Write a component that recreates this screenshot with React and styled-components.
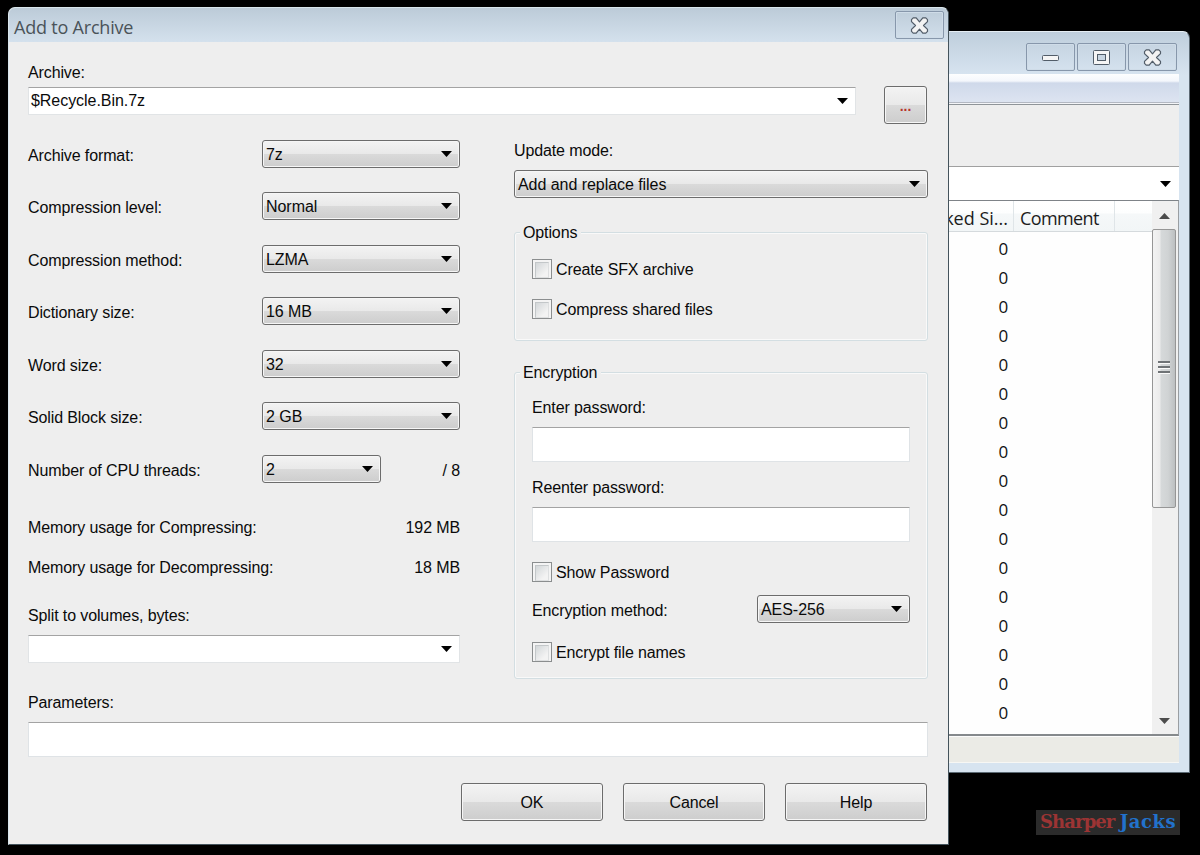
import React from 'react'
import styled, { createGlobalStyle } from 'styled-components'

const GlobalStyle = createGlobalStyle`
    * {
        box-sizing: border-box;
    }
    body {
        margin: 0;
        background-color: #000;
        overflow: hidden;
    }
`

const Desktop = styled.div`
    position: relative;
    width: 1200px;
    height: 855px;
    background-color: #000;
    font-family: "Liberation Sans", Arial, sans-serif;
    font-size: 16px;
    line-height: 22px;
    letter-spacing: -0.12px;
    color: #0a0a0a;
    white-space: nowrap;
    overflow: hidden;
`

/* windows */

const MainWindow = styled.div`
    position: absolute;
    left: 700px;
    top: 31px;
    width: 490px;
    height: 742px;
    padding: 0px 10px 9px 10px;
    display: flex;
    flex-direction: column;
    background: linear-gradient(#bfcedc 0px, #d7e4f0 43px, #d7e4f0 100%);
    border: 1px solid #e6eef4;
    border-right-color: #5c6a74;
    border-bottom-color: #5c6a74;
    border-radius: 7px 7px 0px 0px;
`
const DialogWindow = styled.div`
    position: absolute;
    left: 8px;
    top: 7px;
    width: 941px;
    height: 838px;
    display: flex;
    flex-direction: column;
    background-color: #eeeeee;
    border: 1px solid #d9e6ec;
    border-right-color: #44535c;
    border-bottom-color: #44535c;
    border-radius: 7px 7px 0px 0px;
    overflow: hidden;
`
const TitleBar = styled.div`
    height: 34px;
    padding: 3px 4px 0px 5px;
    display: flex;
    justify-content: space-between;
    align-items: flex-start;
    background: linear-gradient(#bccbd8, #d4e1ed);
`
const Title = styled.div`
    font-family: "Open Sans", "Noto Sans", sans-serif;
    font-size: 18px;
    line-height: 32px;
    letter-spacing: -0.2px;
    color: #4a5359;
`
const WindowButtons = styled.div`
    height: 42px;
    padding: 11px 2px 0px 0px;
    display: flex;
    justify-content: flex-end;
    gap: 2px;
`
const WindowButton = styled.div`
    width: 49px;
    height: 28px;
    display: flex;
    align-items: center;
    justify-content: center;
    border: 1px solid #8797ab;
    border-radius: 2px;
    box-shadow: inset 0 0 0 1px #cfdce8;
`

/* main window parts */

const MenuBar = styled.div`
    height: 31px;
    background: linear-gradient(#fdfeff 0px, #f4f7fc 7px, #cfd9ea 9px, #dde4f1 28px, #b3b8c2 28px, #b3b8c2 29px, #f4f5f8 29px);
    border-bottom: 1px solid #8f9499;
`
const ToolBar = styled.div`
    height: 61px;
    background-color: #eeeeee;
`
const AddressBar = styled.div`
    height: 34px;
    padding-right: 8px;
    display: flex;
    align-items: center;
    justify-content: flex-end;
    background-color: #fff;
    border-top: 1px solid #a0a0a0;
`
const ListView = styled.div`
    height: 536px;
    display: flex;
    background-color: #fefefe;
    border-top: 1px solid #7e8388;
    border-right: 1px solid #9a9ea2;
    border-bottom: 2px solid #85898c;
    font-family: "Open Sans", "Noto Sans", sans-serif;
    font-size: 17px;
`
const ListBody = styled.div`
    flex: 1;
`
const ListHeader = styled.div`
    height: 31px;
    display: flex;
    font-size: 18px;
    line-height: 34px;
    background: linear-gradient(#ffffff 0px, #fdfefe 12px, #f5f8f9 13px, #f2f6f7 100%);
    border-bottom: 1px solid #d5dadd;
    color: #1c1c1c;
`
const HeaderCell = styled.div`
    width: ${props => props.$width}px;
    padding: 0px 5px 0px 6px;
    text-align: ${props => props.$align || 'left'};
    letter-spacing: ${props => props.$align === 'right' ? '0px' : '-0.6px'};
    border-right: 1px solid #dfe5e8;
    overflow: hidden;
`
const ListRows = styled.div`
    padding-top: 3px;
    width: 297px;
`
const ListCell = styled.div`
    height: 29px;
    line-height: 28px;
    text-align: right;
    color: #111;
`
const ScrollBar = styled.div`
    width: 26px;
    padding: 0px 2px 0px 0px;
    display: flex;
    flex-direction: column;
    align-items: center;
    background-color: #f0f0f0;
`
const ScrollArrow = styled.div`
    height: 28px;
    padding: 1px 0px 0px 1px;
    display: flex;
    align-items: center;
`
const ScrollThumb = styled.div`
    width: 24px;
    height: 279px;
    margin-bottom: auto;
    padding: 0px 1px 2px 0px;
    display: flex;
    flex-direction: column;
    align-items: center;
    justify-content: center;
    gap: 2px;
    background: linear-gradient(90deg, #f3f3f3 0px, #ebebeb 7px, #d6d9da 8px, #d0d3d4 15px, #bcbfc1 22px);
    border: 1px solid #969696;
    border-radius: 2px;
`
const Grip = styled.div`
    width: 12px;
    height: 3px;
    background-color: #6f7376;
    border-bottom: 1px solid #fafafa;
`
const StatusBar = styled.div`
    flex: 1;
    background-color: #ebebe6;
    border-top: 1px solid #fbfbfb;
    border-bottom: 1px solid #f7f7f4;
`

/* dialog parts */

const DialogBody = styled.div`
    padding: 20px 20px 0px 19px;
`
const Label = styled.div`
    height: 20px;
    margin-top: ${props => props.$top || 0}px;
`
const ArchiveRow = styled.div`
    height: 38px;
    margin-top: 4px;
    display: flex;
    justify-content: space-between;
    padding-right: 1px;
`
const Columns = styled.div`
    display: flex;
    justify-content: space-between;
`
const LeftColumn = styled.div`
    width: 432px;
    padding-top: 15.8px;
`
const RightColumn = styled.div`
    width: 414px;
    padding-top: 16px;
`
const Settings = styled.div`
    display: flex;
    flex-direction: column;
    gap: 24.5px;
    margin-bottom: 34.2px;
`
const SettingRow = styled.div`
    height: 28px;
    display: flex;
`
const SettingLabel = styled.div`
    width: 234px;
    padding-top: 5px;
`
const ThreadCount = styled.div`
    margin-left: auto;
    padding-top: 5px;
`
const MemoryRow = styled.div`
    height: 20px;
    margin-bottom: 20px;
    display: flex;
    justify-content: space-between;
`
const SelectBox = styled.div`
    width: ${props => props.$width}px;
    height: 28px;
    margin-top: ${props => props.$top || 0}px;
    padding: 0px 7px 0px 3px;
    display: flex;
    align-items: center;
    justify-content: space-between;
    line-height: 26px;
    letter-spacing: -0.05px;
    background: linear-gradient(#f3f3f3 0%, #e9e9e9 49%, #dadada 51%, #cdcdcd 100%);
    border: 1px solid #6c6c6c;
    border-radius: 3px;
    box-shadow: inset 0 0 0 1px #f6f6f6;
`
const SelectValue = styled.span`
    padding-top: 2px;
`
const ComboBox = styled(SelectBox)`
    padding: 0px 7px 0px 2px;
    background: #fff;
    border: 1px solid #e1e4e6;
    border-top-color: #a3a3a3;
    border-radius: 0px;
    box-shadow: none;
`
const TextField = styled.div`
    height: 35px;
    margin-top: 10px;
    background-color: #fff;
    border: 1px solid #dfe3e6;
    border-top-color: #a3a3a3;
`
const Button = styled.div`
    width: ${props => props.$width}px;
    height: 38px;
    line-height: 37px;
    text-align: center;
    background: linear-gradient(#f3f3f3 0%, #e9e9e9 49%, #dadada 51%, #cdcdcd 100%);
    border: 1px solid #6c6c6c;
    border-radius: 3px;
    box-shadow: inset 0 0 0 1px #f6f6f6;
`
const BrowseButton = styled(Button)`
    line-height: 38px;
    letter-spacing: 0px;
    font-size: 14px;
    font-weight: 700;
    color: #b8342c;
`
const Group = styled.div`
    height: ${props => props.$height}px;
    margin-top: ${props => props.$top}px;
    padding: 0px 17px;
    border: 1px solid #d3dee2;
    border-radius: 3px;
    box-shadow: inset 0 0 0 1px #f9f9f9;
`
const Legend = styled.div`
    width: fit-content;
    height: 20px;
    margin: -11px 0px 0px -12px;
    padding: 0px 4px 0px 3px;
    background-color: #eeeeee;
`
const CheckRow = styled.div`
    height: 20px;
    margin-top: ${props => props.$top}px;
    display: flex;
    gap: 4px;
`
const CheckBox = styled.div`
    width: 20px;
    height: 20px;
    padding: 2px;
    background-color: #f4f4f4;
    border: 1px solid #8b8e8f;

    &::before {
        content: "";
        display: block;
        height: 14px;
        border: 1px solid #c3c7c9;
        border-right-color: #dddfe0;
        border-bottom-color: #dddfe0;
        background: linear-gradient(135deg, #d3d7d9, #f3f3f3 75%);
    }
`
const MethodRow = styled.div`
    height: 28px;
    margin-top: 13px;
    display: flex;
    justify-content: space-between;
`
const MethodLabel = styled.div`
    padding-top: 5px;
`
const ButtonRow = styled.div`
    margin-top: 26px;
    padding-right: 1px;
    display: flex;
    justify-content: flex-end;
    gap: 20px;
`

const Watermark = styled.div`
    position: absolute;
    left: 1036px;
    top: 810px;
    width: 144px;
    height: 25px;
    padding-left: 4px;
    background-color: #2b2b2b;
    font-family: "DejaVu Serif", serif;
    font-size: 18px;
    font-weight: 700;
    line-height: 24px;
    letter-spacing: -0.9px;
    color: #9c3434;
`
const WatermarkBlue = styled.span`
    letter-spacing: 0.5px;
    color: #2272cc;
`

const Arrow = () => (
    <svg width="11" height="6" viewBox="0 0 11 6">
        <path d="M0 0H11L5.5 6Z" fill="#000"/>
    </svg>
)

const ScrollTriangle = ({ down }) => (
    <svg width="11" height="6" viewBox="0 0 11 6">
        <path d={down ? 'M0 0H11L5.5 6Z' : 'M0 6H11L5.5 0Z'} fill="#4c4c4c"/>
    </svg>
)

const CloseIcon = () => (
    <svg width="19" height="17" viewBox="0 0 19 17">
        <path
            d="M1.5 2.6L3.2 0.9H6.2L9.5 4.8L12.8 0.9H15.8L17.5 2.6V4.6L13.5 8.5L17.5 12.4V14.4L15.8 16.1H12.8L9.5 12.2L6.2 16.1H3.2L1.5 14.4V12.4L5.5 8.5L1.5 4.6Z"
            fill="#f3f3f3"
            stroke="#525d69"
            strokeWidth="1.2"
            strokeLinejoin="round"
        />
    </svg>
)

const MinimizeIcon = () => (
    <svg width="17" height="17" viewBox="0 0 17 17">
        <rect x="0.5" y="6.5" width="16" height="5" rx="1" fill="#f5f5f5" stroke="#525d69"/>
    </svg>
)

const MaximizeIcon = () => (
    <svg width="17" height="15" viewBox="0 0 17 15">
        <rect x="0.5" y="0.5" width="16" height="14" rx="1" fill="#f5f5f5" stroke="#525d69"/>
        <rect x="4.5" y="4.5" width="8" height="6" fill="#c9d6e2" stroke="#525d69"/>
    </svg>
)

const settings = [
    { label: 'Archive format:', value: '7z' },
    { label: 'Compression level:', value: 'Normal' },
    { label: 'Compression method:', value: 'LZMA' },
    { label: 'Dictionary size:', value: '16 MB' },
    { label: 'Word size:', value: '32' },
    { label: 'Solid Block size:', value: '2 GB' },
    { label: 'Number of CPU threads:', value: '2', width: 119, total: '/ 8' },
]

const Select = ({ width, top, value }) => (
    <SelectBox $width={width} $top={top}>
        <SelectValue>{value}</SelectValue>
        <Arrow/>
    </SelectBox>
)

const Check = ({ top, children }) => (
    <CheckRow $top={top}>
        <CheckBox/>
        <span>{children}</span>
    </CheckRow>
)

const FileManager = () => (
    <MainWindow>
        <WindowButtons>
            <WindowButton><MinimizeIcon/></WindowButton>
            <WindowButton><MaximizeIcon/></WindowButton>
            <WindowButton><CloseIcon/></WindowButton>
        </WindowButtons>
        <MenuBar/>
        <ToolBar/>
        <AddressBar><Arrow/></AddressBar>
        <ListView>
            <ListBody>
                <ListHeader>
                    <HeaderCell $width={303} $align="right">Packed Si...</HeaderCell>
                    <HeaderCell $width={101}>Comment</HeaderCell>
                </ListHeader>
                <ListRows>
                    {Array.from({ length: 17 }, (_, i) => (
                        <ListCell key={i}>0</ListCell>
                    ))}
                </ListRows>
            </ListBody>
            <ScrollBar>
                <ScrollArrow><ScrollTriangle/></ScrollArrow>
                <ScrollThumb>
                    <Grip/>
                    <Grip/>
                    <Grip/>
                </ScrollThumb>
                <ScrollArrow><ScrollTriangle down/></ScrollArrow>
            </ScrollBar>
        </ListView>
        <StatusBar/>
    </MainWindow>
)

const AddToArchive = () => (
    <DialogWindow>
        <TitleBar>
            <Title>Add to Archive</Title>
            <WindowButton><CloseIcon/></WindowButton>
        </TitleBar>
        <DialogBody>
            <Label>Archive:</Label>
            <ArchiveRow>
                <ComboBox $width={828} $top={1}>
                    <span>$Recycle.Bin.7z</span>
                    <Arrow/>
                </ComboBox>
                <BrowseButton $width={43}>...</BrowseButton>
            </ArchiveRow>
            <Columns>
                <LeftColumn>
                    <Settings>
                        {settings.map(item => (
                            <SettingRow key={item.label}>
                                <SettingLabel>{item.label}</SettingLabel>
                                <Select width={item.width || 198} value={item.value}/>
                                {item.total && <ThreadCount>{item.total}</ThreadCount>}
                            </SettingRow>
                        ))}
                    </Settings>
                    <MemoryRow>
                        <span>Memory usage for Compressing:</span>
                        <span>192 MB</span>
                    </MemoryRow>
                    <MemoryRow>
                        <span>Memory usage for Decompressing:</span>
                        <span>18 MB</span>
                    </MemoryRow>
                    <Label $top={28}>Split to volumes, bytes:</Label>
                    <ComboBox $width={432} $top={10}>
                        <span/>
                        <Arrow/>
                    </ComboBox>
                </LeftColumn>
                <RightColumn>
                    <Label>Update mode:</Label>
                    <Select width={414} top={10} value="Add and replace files"/>
                    <Group $height={109} $top={34}>
                        <Legend>Options</Legend>
                        <Check top={17}>Create SFX archive</Check>
                        <Check top={20}>Compress shared files</Check>
                    </Group>
                    <Group $height={307} $top={31}>
                        <Legend>Encryption</Legend>
                        <Label $top={15}>Enter password:</Label>
                        <TextField/>
                        <Label $top={15}>Reenter password:</Label>
                        <TextField/>
                        <Check top={20}>Show Password</Check>
                        <MethodRow>
                            <MethodLabel>Encryption method:</MethodLabel>
                            <Select width={153} value="AES-256"/>
                        </MethodRow>
                        <Check top={19}>Encrypt file names</Check>
                    </Group>
                </RightColumn>
            </Columns>
            <Label $top={13}>Parameters:</Label>
            <TextField/>
            <ButtonRow>
                <Button $width={142}>OK</Button>
                <Button $width={142}>Cancel</Button>
                <Button $width={142}>Help</Button>
            </ButtonRow>
        </DialogBody>
    </DialogWindow>
)

const App = () => {
    return (
        <Desktop>
            <GlobalStyle/>
            <FileManager/>
            <AddToArchive/>
            <Watermark>Sharper <WatermarkBlue>Jacks</WatermarkBlue></Watermark>
        </Desktop>
    )
}

export default App
